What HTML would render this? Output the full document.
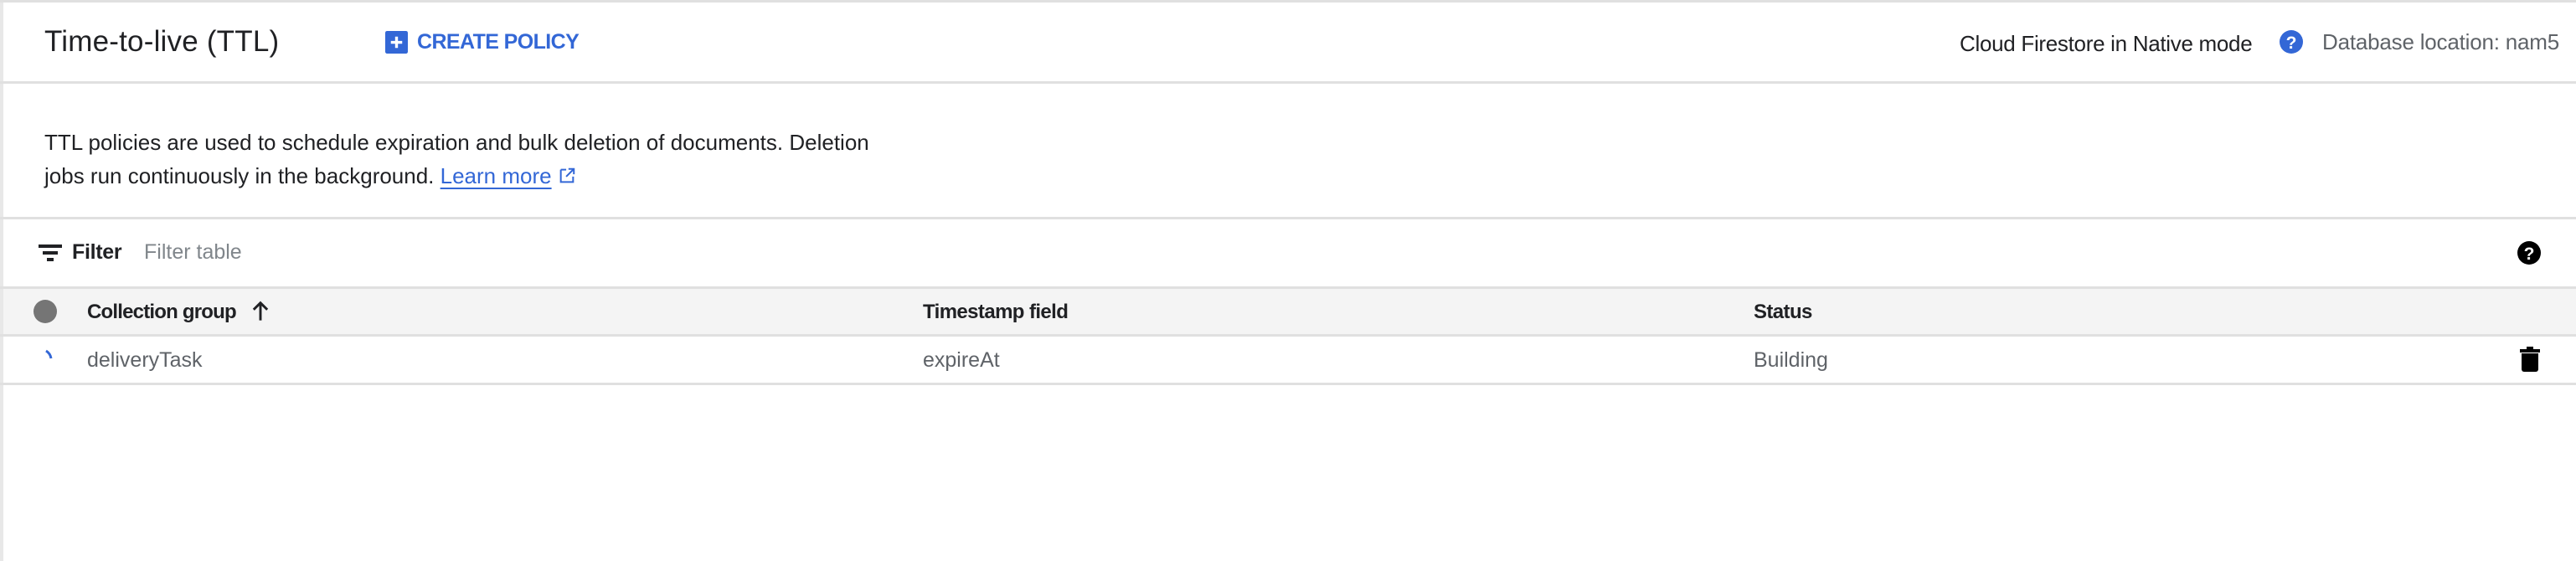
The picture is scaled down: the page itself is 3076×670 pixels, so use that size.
<!DOCTYPE html>
<html><head><style>
html,body{margin:0;padding:0;width:3076px;height:670px;overflow:hidden;background:#fff;font-family:"Liberation Sans",sans-serif;}
.abs{position:absolute;white-space:nowrap;}
.line{position:absolute;left:0;width:3076px;height:3px;background:#e0e0e0;}
</style></head><body>
<div style="position:absolute;left:0;top:0;width:4px;height:670px;background:#e8e8e8"></div>
<div class="line" style="top:0;height:3px"></div>
<div class="abs" style="left:53px;top:30px;font-size:35px;color:#202124;letter-spacing:0.2px">Time-to-live (TTL)</div>
<svg class="abs" style="left:460px;top:37px" width="27" height="27" viewBox="0 0 24 24"><rect x="0" y="0" width="24" height="24" rx="2" fill="#3367d6"/><path d="M12 6v12M6 12h12" stroke="#fff" stroke-width="3"/></svg>
<div class="abs" style="left:498px;top:36px;font-size:25px;font-weight:bold;color:#3367d6;letter-spacing:-0.6px">CREATE POLICY</div>
<div class="abs" style="left:2340px;top:37px;font-size:26px;color:#202124;letter-spacing:-0.3px">Cloud Firestore in Native mode</div>
<svg class="abs" style="left:2722px;top:36px" width="28" height="28" viewBox="0 0 24 24"><circle cx="12" cy="12" r="12" fill="#3367d6"/><text x="12" y="19" font-size="18" font-weight="bold" fill="#fff" text-anchor="middle" font-family="Liberation Sans">?</text></svg>
<div class="abs" style="left:2773px;top:35px;font-size:26px;color:#5f6368;letter-spacing:-0.2px">Database location: nam5</div>
<div class="line" style="top:97px"></div>
<div class="abs" style="left:53px;top:150px;font-size:26px;line-height:40px;color:#202124;letter-spacing:0px">TTL policies are used to schedule expiration and bulk deletion of documents. Deletion<br>jobs run continuously in the background. <span style="color:#3367d6;text-decoration:underline;text-underline-offset:5px">Learn more</span> <svg width="22" height="22" viewBox="0 0 24 24" style="vertical-align:-2px"><path d="M4 4h7M4 4v16h16v-7M14 3h7v7M21 3l-10 10" stroke="#3367d6" stroke-width="2.2" fill="none"/></svg></div>
<div class="line" style="top:259px"></div>
<svg class="abs" style="left:46px;top:292px" width="28" height="20" viewBox="0 0 28 20"><rect x="0" y="0" width="28" height="4" fill="#202124"/><rect x="5" y="8" width="18" height="4" fill="#202124"/><rect x="10" y="16" width="8" height="4" fill="#202124"/></svg>
<div class="abs" style="left:86px;top:287px;font-size:25px;font-weight:bold;color:#202124;letter-spacing:-0.3px">Filter</div>
<div class="abs" style="left:172px;top:287px;font-size:25px;color:#80868b">Filter table</div>
<svg class="abs" style="left:3006px;top:288px" width="28" height="28" viewBox="0 0 24 24"><circle cx="12" cy="12" r="12" fill="#000"/><text x="12" y="19" font-size="18" font-weight="bold" fill="#fff" text-anchor="middle" font-family="Liberation Sans">?</text></svg>
<div style="position:absolute;left:4px;top:343px;width:3072px;height:57px;background:#f4f4f4"></div>
<div class="line" style="top:342px"></div>
<div class="line" style="top:399px"></div>
<div class="abs" style="left:40px;top:358px;width:28px;height:28px;border-radius:50%;background:#757575"></div>
<div class="abs" style="left:104px;top:359px;font-size:24px;font-weight:bold;color:#202124;letter-spacing:-0.8px">Collection group</div>
<svg class="abs" style="left:297px;top:357px" width="28" height="28" viewBox="0 0 24 24"><path d="M12 22V4M5 11l7-7 7 7" stroke="#202124" stroke-width="2.5" fill="none"/></svg>
<div class="abs" style="left:1102px;top:359px;font-size:24px;font-weight:bold;color:#202124;letter-spacing:-0.6px">Timestamp field</div>
<div class="abs" style="left:2094px;top:359px;font-size:24px;font-weight:bold;color:#202124;letter-spacing:-0.6px">Status</div>
<svg class="abs" style="left:52px;top:416px" width="20" height="20" viewBox="0 0 20 20"><path d="M3 3 Q8 6 9 12" stroke="#3367d6" stroke-width="3" fill="none"/></svg>
<div class="abs" style="left:104px;top:416px;font-size:25px;color:#5f6368">deliveryTask</div>
<div class="abs" style="left:1102px;top:416px;font-size:25px;color:#5f6368">expireAt</div>
<div class="abs" style="left:2094px;top:416px;font-size:25px;color:#5f6368">Building</div>
<svg class="abs" style="left:3008px;top:414px" width="26" height="30" viewBox="0 0 26 30"><rect x="1" y="3" width="24" height="4" fill="#000"/><rect x="9" y="0" width="8" height="4" fill="#000"/><path d="M3 8h20v19a3 3 0 0 1-3 3H6a3 3 0 0 1-3-3z" fill="#000"/></svg>
<div class="line" style="top:457px"></div>
</body></html>
